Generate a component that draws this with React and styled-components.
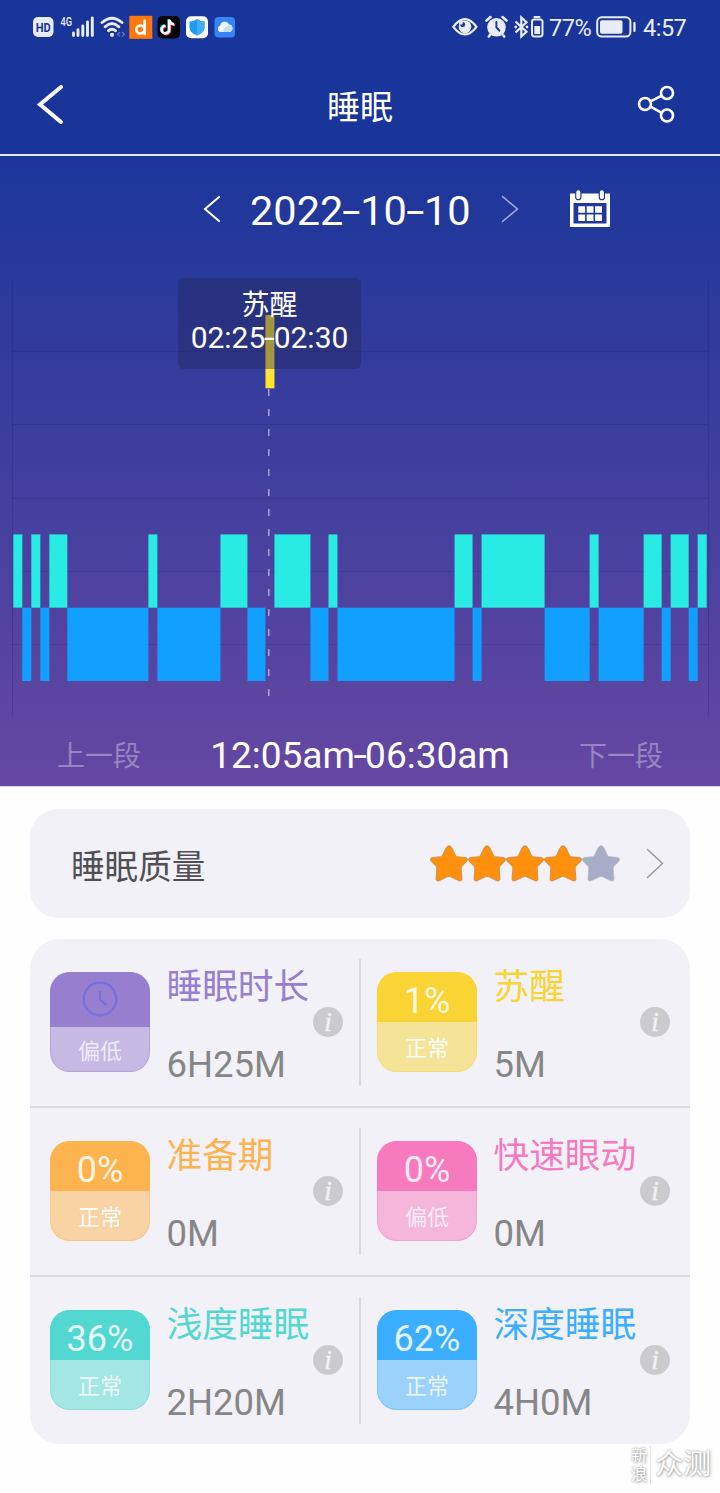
import React from 'react';
import styled, { createGlobalStyle } from 'styled-components';

const GlobalStyle = createGlobalStyle`
  * { box-sizing: border-box; }
  body {
    margin: 0;
    background: #fefefe;
    font-family: Roboto, "Noto Sans CJK SC", sans-serif;
  }
`;

const Screen = styled.div`
  position: relative;
  width: 720px;
  height: 1493px;
  overflow: hidden;
  background: #fefefe;
`;

const Header = styled.header`
  height: 156px;
  background: #1a3599;
  border-bottom: 2px solid #e6e9f6;
`;

const StatusBar = styled.div`
  display: flex;
  justify-content: space-between;
  height: 54px;
  padding: 0 34px 0 33px;
`;

const StatusGroup = styled.div`
  display: flex;
  align-items: center;
  color: #e9ecfa;
  svg { display: block; flex: none; }
`;

const StatusText = styled.span`
  width: ${(p) => p.$width}px;
  margin: 2px ${(p) => p.$after || 0}px 0 ${(p) => p.$gap}px;
  font-size: 23.5px;
  line-height: 28px;
  letter-spacing: ${(p) => p.$track}px;
  white-space: nowrap;
`;

const TitleBar = styled.div`
  display: flex;
  align-items: center;
  justify-content: space-between;
  height: 100px;
  padding: 0 45px 0 36px;
  svg { display: block; }
`;

const Title = styled.h1`
  margin: 7px 0 0 18px;
  font-size: 33px;
  font-weight: 400;
  line-height: 40px;
  color: #fff;
`;

const SleepPanel = styled.section`
  height: 631px;
  background: linear-gradient(180deg, #1d369b 0%, #27399b 17%, #3b3d9d 43%, #4440a0 56%, #5443a0 76%, #6548a2 100%);
  border-bottom: 1px solid #d9d3e8;
`;

const DateBar = styled.div`
  display: flex;
  align-items: center;
  height: 108px;
  padding: 0 0 2px 203px;
  svg { display: block; flex: none; }
`;

const DateText = styled.span`
  width: 225px;
  margin: 3px 26px 0 29px;
  font-size: 41.5px;
  line-height: 50px;
  white-space: nowrap;
  color: #fff;
`;

const Dash = styled.span`
  display: inline-block;
  width: ${(p) => p.$width};
  text-align: center;
  transform: scaleX(${(p) => p.$stretch});
`;

const CalendarSlot = styled.span`
  margin: 0 0 1px 50px;
`;

const ChartArea = styled.div`
  position: relative;
  height: 453px;
  svg { display: block; }
`;

const Tooltip = styled.div`
  position: absolute;
  left: 178px;
  top: 14px;
  width: 183px;
  height: 91px;
  padding-top: 12px;
  border-radius: 6px;
  background: rgba(36, 40, 90, 0.42);
  color: #fff;
  text-align: center;
`;

const TooltipLabel = styled.div`
  font-size: 28px;
  line-height: 32px;
`;

const TooltipTime = styled.div`
  font-size: 30px;
  line-height: 31px;
  white-space: nowrap;
`;

const PeriodBar = styled.div`
  display: flex;
  align-items: center;
  justify-content: space-between;
  height: 68px;
  padding: 9px 57px 0;
`;

const PeriodLink = styled.span`
  margin-top: 2px;
  font-size: 28px;
  line-height: 34px;
  color: rgba(255, 255, 255, 0.34);
`;

const PeriodText = styled.span`
  font-size: 37px;
  line-height: 44px;
  color: #fff;
`;

const Content = styled.main`
  display: flex;
  flex-direction: column;
  gap: 21px;
  padding: 22px 30px 0;
`;

const QualityCard = styled.section`
  display: flex;
  align-items: center;
  height: 109px;
  padding: 0 26px 0 41px;
  border-radius: 28px;
  background: #f2f1f8;
`;

const QualityLabel = styled.span`
  flex: 1;
  margin-top: 9px;
  font-size: 33.6px;
  line-height: 40px;
  color: #505054;
`;

const Stars = styled.div`
  display: flex;
  margin-right: 26px;
  svg { display: block; overflow: visible; }
`;

const StatsCard = styled.section`
  border-radius: 30px;
  background: #f2f1f8;
`;

const StatsRow = styled.div`
  display: flex;
  align-items: center;
  height: ${(p) => (p.$last ? 167 : 169)}px;
  border-bottom: ${(p) => (p.$last ? 0 : 2)}px solid #dadae2;
`;

const StatCell = styled.div`
  display: flex;
  align-items: center;
  width: ${(p) => (p.$divided ? 331 : 329)}px;
  height: 127px;
  padding: 0 0 2px ${(p) => (p.$divided ? 20 : 16)}px;
  border-right: ${(p) => (p.$divided ? '2px solid #dadae2' : '0')};
  flex: none;
`;

const Tile = styled.div`
  display: flex;
  flex-direction: column;
  width: 100px;
  height: 100px;
  border-radius: 20px;
  overflow: hidden;
  background: ${(p) => p.$soft};
  box-shadow: inset 0 0 0 1px ${(p) => p.$color}55;
`;

const TileTop = styled.div`
  display: flex;
  align-items: center;
  justify-content: center;
  height: ${(p) => p.$height}px;
  padding-top: ${(p) => p.$inset}px;
  background: ${(p) => p.$color};
  color: rgba(255, 255, 255, 0.86);
  font-size: 36px;
  line-height: 40px;
`;

const TileBottom = styled.div`
  display: flex;
  flex: 1;
  align-items: center;
  justify-content: center;
  padding-top: 5px;
  font-size: 22px;
  line-height: 28px;
  color: rgba(255, 255, 255, ${(p) => p.$alpha});
`;

const StatText = styled.div`
  display: flex;
  flex-direction: column;
  justify-content: space-between;
  width: 146.5px;
  height: 125px;
  margin-left: 16.5px;
  padding-top: 2px;
  white-space: nowrap;
`;

const StatName = styled.span`
  font-size: 35.7px;
  line-height: 52px;
  color: ${(p) => p.$color};
`;

const StatValue = styled.span`
  font-size: 36.5px;
  line-height: 38px;
  color: #868686;
`;

const InfoBadge = styled.span`
  display: flex;
  align-items: center;
  justify-content: center;
  width: 30px;
  height: 30px;
  border-radius: 50%;
  background: #cbcacf;
  color: #f2f1f6;
  font: italic 400 27px/30px "Liberation Serif", serif;
  -webkit-text-stroke: 0.5px #f2f1f6;
`;

const Watermark = styled.div`
  position: absolute;
  left: 631px;
  top: 1446px;
  display: flex;
  align-items: center;
  color: #fff;
  text-shadow: 0 0 2px #999, 1px 1px 3px #aaa;
`;

const WatermarkSmall = styled.div`
  width: 20px;
  font-size: 16px;
  line-height: 19px;
  border-right: 1px solid #e6e6e6;
`;

const WatermarkLarge = styled.div`
  margin-left: 4px;
  font-size: 28px;
  line-height: 36px;
`;

/* Sleep stages in five-minute units, from 12:05am to 06:30am */
const stages = [
  ['L', 1], ['D', 1], ['L', 1], ['D', 1], ['L', 2], ['D', 9], ['L', 1], ['D', 7],
  ['L', 3], ['D', 2], ['A', 1], ['L', 4], ['D', 2], ['L', 1], ['D', 13], ['L', 2],
  ['D', 1], ['L', 7], ['D', 5], ['L', 1], ['D', 5], ['L', 2], ['D', 1], ['L', 2],
  ['D', 1], ['L', 1],
];
const stageStyle = {
  A: { y: 51, color: '#ffe526' },
  L: { y: 270.4, color: '#28ebe3' },
  D: { y: 343.7, color: '#11a0ff' },
};
const UNIT = 9.005;

function SleepChart() {
  let x = 13.3;
  const bars = stages.map(([kind, units], i) => {
    const bar = { key: i, x, width: units * UNIT, ...stageStyle[kind] };
    x += units * UNIT;
    return bar;
  });
  return (
    <svg width="720" height="453">
      <g stroke="#241f70" strokeOpacity="0.25" strokeWidth="1">
        <path d="M12.5 15V453M708.5 15V453" />
        <path d="M12 87.5H708M12 160.5H708M12 234.5H708M12 307.5H708M12 380.5H708" />
      </g>
      {bars.map((b) => (
        <rect key={b.key} x={b.x} y={b.y} width={b.width} height="73.3" fill={b.color} />
      ))}
      <path d="M268.800 105V432" stroke="#dddbe8" strokeOpacity=".75" strokeWidth="1.3" strokeDasharray="7 13" />
    </svg>
  );
}

function NetworkIcons() {
  return (
    <svg width="204" height="30" viewBox="33 12 204 30">
      <rect x="33" y="17" width="20.500" height="20" rx="5" fill="#e9ecfa" />
      <text x="43.200" y="32" textAnchor="middle" fontSize="12.500" fontWeight="700" textLength="15" lengthAdjust="spacingAndGlyphs" fill="#1a3599">HD</text>
      <text x="60.500" y="25.500" fontSize="12" fontWeight="500" textLength="11.500" lengthAdjust="spacingAndGlyphs" fill="#e9ecfa">4G</text>
      <path d="M73.500 33V35.500M78 29.800V35.500M82.800 26V35.500M87.500 22V35.500M92.300 18V35.500" stroke="#e9ecfa" strokeWidth="2.900" strokeLinecap="round" />
      <g fill="none" stroke="#e9ecfa" strokeWidth="2.900" strokeLinecap="round">
        <path d="M102 22.500Q112 13.800 122 22.500M105.200 26.700Q112 20.500 118.800 26.700M108.500 30.600Q112 27.700 115.500 30.600" />
      </g>
      <circle cx="112" cy="34.800" r="2.100" fill="#e9ecfa" />
      <path d="M120 32l-2.500 2.200 2.500 2.200M122 32l2.500 2.200-2.500 2.200" fill="none" stroke="#6877b8" strokeWidth="1.200" />
      <rect x="129.300" y="15.800" width="23" height="23" fill="#ff780e" />
      <circle cx="140.300" cy="29.500" r="4" fill="none" stroke="#fff" strokeWidth="2.600" />
      <path d="M144.600 20.800V34" stroke="#fff" strokeWidth="2.600" strokeLinecap="round" />
      <rect x="157.500" y="16" width="22.500" height="22.500" rx="5" fill="#050507" />
      <g fill="none" strokeWidth="2.400">
        <path d="M169.300 19.800V29.700a3.800 3.800 0 1 1-3.800-3.800M169.300 19.800Q170 24 174.200 24.300" stroke="#ff3158" transform="translate(.8 .8)" />
        <path d="M169.300 19.800V29.700a3.800 3.800 0 1 1-3.800-3.800M169.300 19.800Q170 24 174.200 24.300" stroke="#2ce8e8" transform="translate(-.7 -.5)" />
        <path d="M169.300 19.800V29.700a3.800 3.800 0 1 1-3.800-3.800M169.300 19.800Q170 24 174.200 24.300" stroke="#fff" />
      </g>
      <rect x="186" y="16.300" width="22" height="22" rx="5" fill="#fbfdff" />
      <path d="M197 19q3.500 2.500 7.500 2.500v6q0 5-7.500 8-7.500-3-7.500-8v-6q4 0 7.500-2.500z" fill="#219bf2" />
      <path d="M197 19q3.500 2.500 7.500 2.500v6q0 5-7.500 8z" fill="#42adf5" />
      <rect x="214.500" y="17" width="20.500" height="20.500" rx="4" fill="#3485f4" />
      <path d="M220 32a3.500 3.500 0 0 1 .2-6.500 4.800 4.800 0 0 1 9-1 3.800 3.800 0 0 1 .3 7.500z" fill="#f0f6ff" />
      <path d="M224 32a3.200 3.200 0 0 1 1.800-5 4 4 0 0 1 3.700-1.500 3.300 3.300 0 0 1 0 6.500z" fill="#c9ddfb" />
    </svg>
  );
}

function DeviceIcons() {
  return (
    <svg width="92" height="30" viewBox="451 12 92 30">
      <path d="M452.300 26.800Q463.900 11.500 475.500 26.800 463.900 42 452.300 26.800z" fill="none" stroke="#e9ecfa" strokeWidth="2.200" />
      <circle cx="464" cy="26.800" r="6.400" fill="#e9ecfa" />
      <circle cx="461.600" cy="24.500" r="2.500" fill="#1a3599" />
      <circle cx="460" cy="22.800" r="1.900" fill="#e9ecfa" />
      <circle cx="495.500" cy="27.300" r="9.300" fill="#e9ecfa" />
      <path d="M485.500 20.500l4-3.400M505.500 20.500l-4-3.400M487.800 36.500l2-2.500M503.200 36.500l-2-2.500" stroke="#e9ecfa" strokeWidth="2.600" strokeLinecap="round" />
      <path d="M495.400 22V27.500l2.900 3.200" fill="none" stroke="#1a3599" strokeWidth="1.900" strokeLinecap="round" />
      <path d="M514.500 21.500l11 10.200-5.200 4.800V17.500l5.200 4.800L514.500 32.500" fill="none" stroke="#e9ecfa" strokeWidth="2.200" />
      <circle cx="514.800" cy="27" r="1.400" fill="#e9ecfa" /><circle cx="526" cy="27" r="1.400" fill="#e9ecfa" />
      <rect x="531" y="19.500" width="10.500" height="17" rx="2.400" fill="none" stroke="#e9ecfa" strokeWidth="2" />
      <rect x="532.500" y="16" width="7" height="2" rx=".9" fill="#e9ecfa" />
      <rect x="533.300" y="26" width="5.800" height="8" fill="#e9ecfa" />
    </svg>
  );
}

function BatteryIcon() {
  return (
    <svg width="41" height="24" viewBox="595 15 41 24">
      <rect x="596.200" y="17.300" width="33.200" height="19.300" rx="4.500" fill="none" stroke="#e9ecfa" strokeWidth="2" />
      <rect x="599" y="20.200" width="22.500" height="13.600" rx="2" fill="#e9ecfa" />
      <rect x="632.300" y="22" width="2.300" height="10" rx="1.100" fill="#e9ecfa" />
    </svg>
  );
}

function Chevron({ width, height, stroke, weight, back }) {
  const d = back
    ? `M${width - weight} ${weight}L${weight} ${height / 2}L${width - weight} ${height - weight}`
    : `M${weight} ${weight}L${width - weight} ${height / 2}L${weight} ${height - weight}`;
  return (
    <svg width={width} height={height}>
      <path d={d} fill="none" stroke={stroke} strokeWidth={weight} strokeLinecap="round" />
    </svg>
  );
}

function ShareIcon() {
  return (
    <svg width="38" height="38" fill="none" stroke="#fff" strokeWidth="2.600">
      <circle cx="8" cy="19" r="6" />
      <circle cx="30" cy="8" r="6" />
      <circle cx="30" cy="30.500" r="6" />
      <path d="M13.500 16.300L24.700 10.700M13.500 21.700L24.700 27.800" />
    </svg>
  );
}

function CalendarIcon() {
  return (
    <svg width="42" height="40">
      <path fill="#fff" fillRule="evenodd" d="M1 4.500H41V38H1zM4.500 14V34.500H37.500V14z" />
      <g fill="#fff" stroke="#23389b" strokeWidth="1.200">
        <rect x="6.700" y="0.700" width="5.200" height="10" rx="2.500" />
        <rect x="30.300" y="0.700" width="5.200" height="10" rx="2.500" />
      </g>
      <path fill="#fff" d="M9.300 17.300h6.800v6.400H9.300zM17.700 17.300h6.800v6.400H17.700zM26.100 17.300h6.800v6.400h-6.800zM9.300 25.500h6.800v6.400H9.300zM17.700 25.500h6.800v6.400H17.700zM26.100 25.500h6.800v6.400h-6.800z" />
    </svg>
  );
}

function Star({ filled }) {
  return (
    <svg width="38" height="37" viewBox="0 0 38 37">
      <path
        d="M19 .8Q21 .8 22 3L25.300 10Q25.900 11.500 27.300 11.700L35.800 12.500Q38.800 13.500 37 16L32 21.300Q31 22.400 31.200 24L32 34Q31.800 36.500 29.500 36L20.500 31.800Q19 31 17.500 31.800L8.500 36Q6.200 36.500 6 34L6.800 24Q7 22.400 6 21.300L1 16Q-.8 13.500 2.200 12.500L10.700 11.700Q12.100 11.500 12.700 10L16 3Q17 .8 19 .8Z"
        fill={filled ? '#ff900d' : '#a7acc7'}
        stroke={filled ? '#c58a4a' : '#b4b7cd'}
        strokeWidth=".8"
      />
    </svg>
  );
}

function ClockIcon() {
  return (
    <svg width="36" height="36" fill="none" stroke="#776fdb" strokeWidth="2.200">
      <circle cx="18" cy="18" r="16.300" />
      <path d="M18 10V18.500L24.500 23.800" />
    </svg>
  );
}

const rows = [
  [
    { name: '睡眠时长', value: '6H25M', level: '偏低', color: '#967fce', soft: '#c6bae4', clock: true, alpha: 0.72 },
    { name: '苏醒', value: '5M', level: '正常', percent: '1%', color: '#f9d434', soft: '#f5e398', alpha: 0.95 },
  ],
  [
    { name: '准备期', value: '0M', level: '正常', percent: '0%', color: '#fdb44e', soft: '#f9d3a4', alpha: 0.95 },
    { name: '快速眼动', value: '0M', level: '偏低', percent: '0%', color: '#f67abd', soft: '#f5b6da', alpha: 0.75 },
  ],
  [
    { name: '浅度睡眠', value: '2H20M', level: '正常', percent: '36%', color: '#52d8d1', soft: '#a4e6e4', alpha: 0.82 },
    { name: '深度睡眠', value: '4H0M', level: '正常', percent: '62%', color: '#3caeff', soft: '#9ad2fc', alpha: 0.82 },
  ],
];

function Stat({ stat, divided }) {
  return (
    <StatCell $divided={divided}>
      <Tile $color={stat.color} $soft={stat.soft}>
        <TileTop $color={stat.color} $height={stat.clock ? 55 : 50} $inset={stat.clock ? 0 : 8}>
          {stat.clock ? <ClockIcon /> : stat.percent}
        </TileTop>
        <TileBottom $alpha={stat.alpha}>{stat.level}</TileBottom>
      </Tile>
      <StatText>
        <StatName $color={stat.color}>{stat.name}</StatName>
        <StatValue>{stat.value}</StatValue>
      </StatText>
      <InfoBadge>i</InfoBadge>
    </StatCell>
  );
}

export default function App() {
  return (
    <Screen>
      <GlobalStyle />
      <Header>
        <StatusBar>
          <StatusGroup><NetworkIcons /></StatusGroup>
          <StatusGroup>
            <DeviceIcons />
            <StatusText $width={42} $gap={5} $after={5} $track={-0.4}>77%</StatusText>
            <BatteryIcon />
            <StatusText $width={43} $gap={6} $track={-0.5}>4:57</StatusText>
          </StatusGroup>
        </StatusBar>
        <TitleBar>
          <Chevron back width={29} height={43} weight={4} stroke="#fff" />
          <Title>睡眠</Title>
          <ShareIcon />
        </TitleBar>
      </Header>
      <SleepPanel>
        <DateBar>
          <Chevron back width={18} height={28} weight={2} stroke="#fff" />
          <DateText>
            2022<Dash $width="17px" $stretch={1.6}>-</Dash>10<Dash $width="17px" $stretch={1.6}>-</Dash>10
          </DateText>
          <Chevron width={18} height={28} weight={1.6} stroke="#9ca6d5" />
          <CalendarSlot><CalendarIcon /></CalendarSlot>
        </DateBar>
        <ChartArea>
          <SleepChart />
          <Tooltip>
            <TooltipLabel>苏醒</TooltipLabel>
            <TooltipTime>02:25<Dash $width="auto" $stretch={1.3}>-</Dash>02:30</TooltipTime>
          </Tooltip>
        </ChartArea>
        <PeriodBar>
          <PeriodLink>上一段</PeriodLink>
          <PeriodText>12:05am<Dash $width="auto" $stretch={1.3}>-</Dash>06:30am</PeriodText>
          <PeriodLink>下一段</PeriodLink>
        </PeriodBar>
      </SleepPanel>
      <Content>
        <QualityCard>
          <QualityLabel>睡眠质量</QualityLabel>
          <Stars>
            {[1, 2, 3, 4, 5].map((n) => <Star key={n} filled={n < 5} />)}
          </Stars>
          <Chevron width={18} height={31} weight={1.5} stroke="#999" />
        </QualityCard>
        <StatsCard>
          {rows.map(([left, right], i) => (
            <StatsRow key={left.name} $last={i === rows.length - 1}>
              <Stat stat={left} divided />
              <Stat stat={right} />
            </StatsRow>
          ))}
        </StatsCard>
      </Content>
      <Watermark>
        <WatermarkSmall>新浪</WatermarkSmall>
        <WatermarkLarge>众测</WatermarkLarge>
      </Watermark>
    </Screen>
  );
}
